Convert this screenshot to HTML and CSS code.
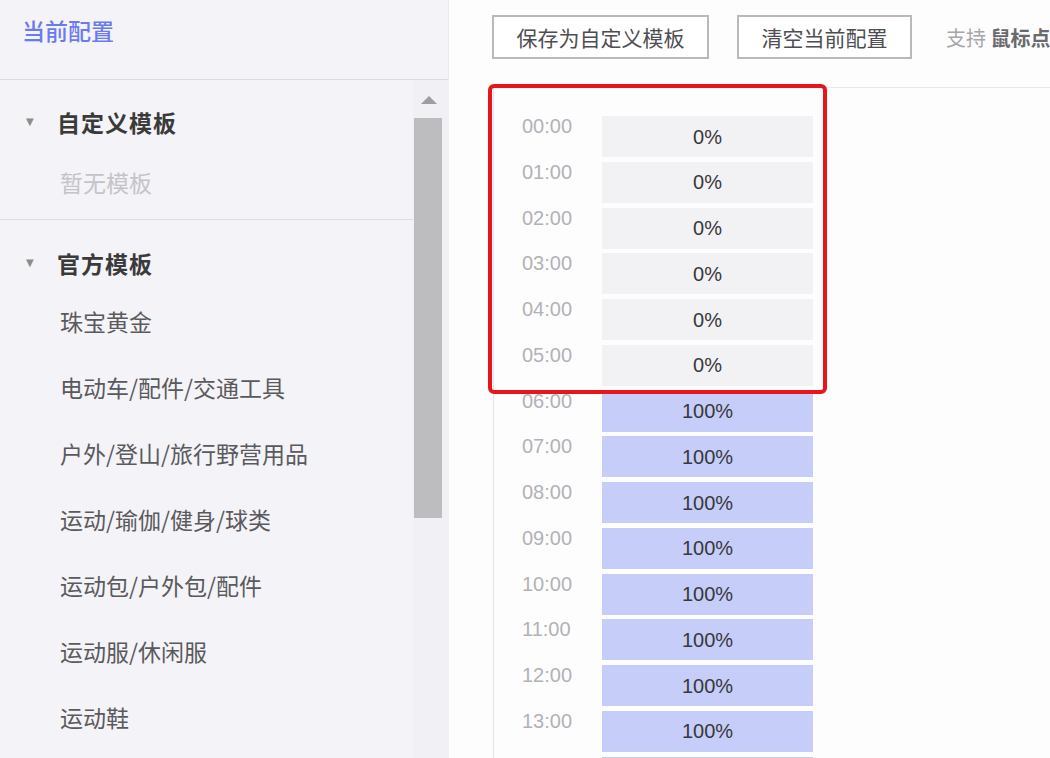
FILE: index.html
```html
<!DOCTYPE html>
<html lang="zh-CN">
<head>
<meta charset="utf-8">
<title>当前配置</title>
<link rel="stylesheet" href="styles.css">
</head>
<body>
<div class="app">
  <aside class="sidebar">
    <div class="sidebar-head">当前配置</div>
    <div class="sidebar-body">
      <div class="tree">
        <section class="group group-custom">
          <div class="group-title"><span class="caret">▼</span>自定义模板</div>
          <div class="empty">暂无模板</div>
        </section>
        <section class="group group-official">
          <div class="group-title"><span class="caret">▼</span>官方模板</div>
          <ul class="items">
            <li>珠宝黄金</li>
            <li>电动车/配件/交通工具</li>
            <li>户外/登山/旅行野营用品</li>
            <li>运动/瑜伽/健身/球类</li>
            <li>运动包/户外包/配件</li>
            <li>运动服/休闲服</li>
            <li>运动鞋</li>
          </ul>
        </section>
      </div>
      <div class="scrollbar">
        <div class="scroll-arrow"></div>
        <div class="scroll-thumb"></div>
      </div>
    </div>
  </aside>
  <main class="main">
    <div class="toolbar">
      <button class="btn btn-save">保存为自定义模板</button>
      <button class="btn btn-clear">清空当前配置</button>
      <span class="hint">支持 <b>鼠标点击或拖拽设置时段</b></span>
    </div>
    <div class="schedule">
      <div class="highlight"></div>
      <div class="rows">
        <div class="row"><span class="time">00:00</span><span class="bar off">0%</span></div>
        <div class="row"><span class="time">01:00</span><span class="bar off">0%</span></div>
        <div class="row"><span class="time">02:00</span><span class="bar off">0%</span></div>
        <div class="row"><span class="time">03:00</span><span class="bar off">0%</span></div>
        <div class="row"><span class="time">04:00</span><span class="bar off">0%</span></div>
        <div class="row"><span class="time">05:00</span><span class="bar off">0%</span></div>
        <div class="row"><span class="time">06:00</span><span class="bar on">100%</span></div>
        <div class="row"><span class="time">07:00</span><span class="bar on">100%</span></div>
        <div class="row"><span class="time">08:00</span><span class="bar on">100%</span></div>
        <div class="row"><span class="time">09:00</span><span class="bar on">100%</span></div>
        <div class="row"><span class="time">10:00</span><span class="bar on">100%</span></div>
        <div class="row"><span class="time">11:00</span><span class="bar on">100%</span></div>
        <div class="row"><span class="time">12:00</span><span class="bar on">100%</span></div>
        <div class="row"><span class="time">13:00</span><span class="bar on">100%</span></div>
        <div class="row"><span class="time"></span><span class="bar on"></span></div>
      </div>
    </div>
  </main>
</div>
</body>
</html>
```
FILE: styles.css
```css
* { box-sizing: border-box; }
html, body {
  margin: 0;
  padding: 0;
  width: 1050px;
  height: 758px;
  overflow: hidden;
  background: #fdfdfe;
  font-family: "Noto Sans CJK SC", "Liberation Sans", sans-serif;
}
.app {
  display: flex;
  width: 1050px;
  height: 758px;
}
.sidebar {
  width: 449px;
  flex: none;
  background: #f4f3f7;
  border-right: 1px solid #ebebef;
  display: flex;
  flex-direction: column;
}
.sidebar-head {
  height: 80px;
  border-bottom: 1px solid #dcdbe0;
  padding: 15px 0 0 22px;
  font-size: 23px;
  line-height: 30px;
  color: #6a7bef;
  font-weight: 500;
}
.sidebar-body {
  flex: 1;
  display: flex;
  min-height: 0;
}
.tree {
  width: 413px;
  flex: none;
}
.group-custom {
  padding: 28px 0 23px;
  border-bottom: 1px solid #dedde2;
}
.group-official {
  padding-top: 29px;
}
.group-title {
  display: flex;
  align-items: center;
  height: 28px;
  padding-left: 26px;
  font-size: 23px;
  font-weight: 700;
  color: #3a3a3a;
  letter-spacing: 1px;
}
.caret {
  font-size: 10px;
  color: #8c8c8c;
  width: 31px;
  line-height: 28px;
  font-family: "DejaVu Sans", sans-serif;
}
.empty {
  margin-top: 32px;
  height: 28px;
  line-height: 28px;
  padding-left: 60px;
  font-size: 23px;
  color: #c4c4c8;
}
.items {
  list-style: none;
  margin: 11px 0 0;
  padding: 0;
}
.items li {
  height: 66px;
  line-height: 66px;
  padding-left: 60px;
  font-size: 23px;
  color: #5a5a5e;
  white-space: nowrap;
}
.scrollbar {
  width: 36px;
  flex: none;
  display: flex;
  flex-direction: column;
  align-items: flex-start;
  background: #f1f0f4;
}
.scroll-arrow {
  width: 0;
  height: 0;
  margin: 16px 0 14px 8px;
  border-left: 8px solid transparent;
  border-right: 8px solid transparent;
  border-bottom: 8px solid #9e9ea2;
}
.scroll-thumb {
  width: 28px;
  height: 400px;
  margin-left: 1px;
  background: #bdbdbf;
}
.main {
  flex: 1;
  min-width: 0;
  overflow: hidden;
  background: #fdfdfe;
}
.toolbar {
  display: flex;
  align-items: center;
  height: 87px;
  padding: 0 0 13px 43px;
  white-space: nowrap;
}
.btn {
  height: 44px;
  border: 2px solid #b9b9bd;
  background: #fff;
  font-family: "Noto Sans CJK SC", sans-serif;
  font-size: 21px;
  color: #4e4e52;
  padding: 0;
  flex: none;
}
.btn-save { width: 217px; }
.btn-clear { width: 175px; margin-left: 28px; }
.hint {
  margin-left: 34px;
  font-size: 20px;
  color: #a6a6aa;
}
.hint b {
  color: #6a6a6e;
  font-weight: 700;
}
.schedule {
  position: relative;
  margin-left: 44px;
  border-top: 1px solid #e8e8ec;
  border-left: 1px solid #e3e3e7;
  height: 700px;
}
.rows {
  padding: 28px 0 0 28px;
}
.row {
  display: flex;
  height: 41px;
  margin-bottom: 4.77px;
}
.time {
  width: 80px;
  flex: none;
  font-family: "Liberation Sans", sans-serif;
  font-size: 20px;
  line-height: 20px;
  color: #b2b2b6;
}
.bar {
  width: 211px;
  flex: none;
  display: flex;
  align-items: center;
  justify-content: center;
  font-family: "Liberation Sans", sans-serif;
  font-size: 20px;
  color: #38383c;
  padding-top: 1px;
}
.bar.off { background: #f2f2f4; }
.bar.on { background: #c5cdf8; }
.highlight {
  position: absolute;
  left: -6px;
  top: -4px;
  width: 339px;
  height: 310px;
  border: 4px solid #e8151b;
  border-radius: 6px;
  pointer-events: none;
  z-index: 2;
}
```
